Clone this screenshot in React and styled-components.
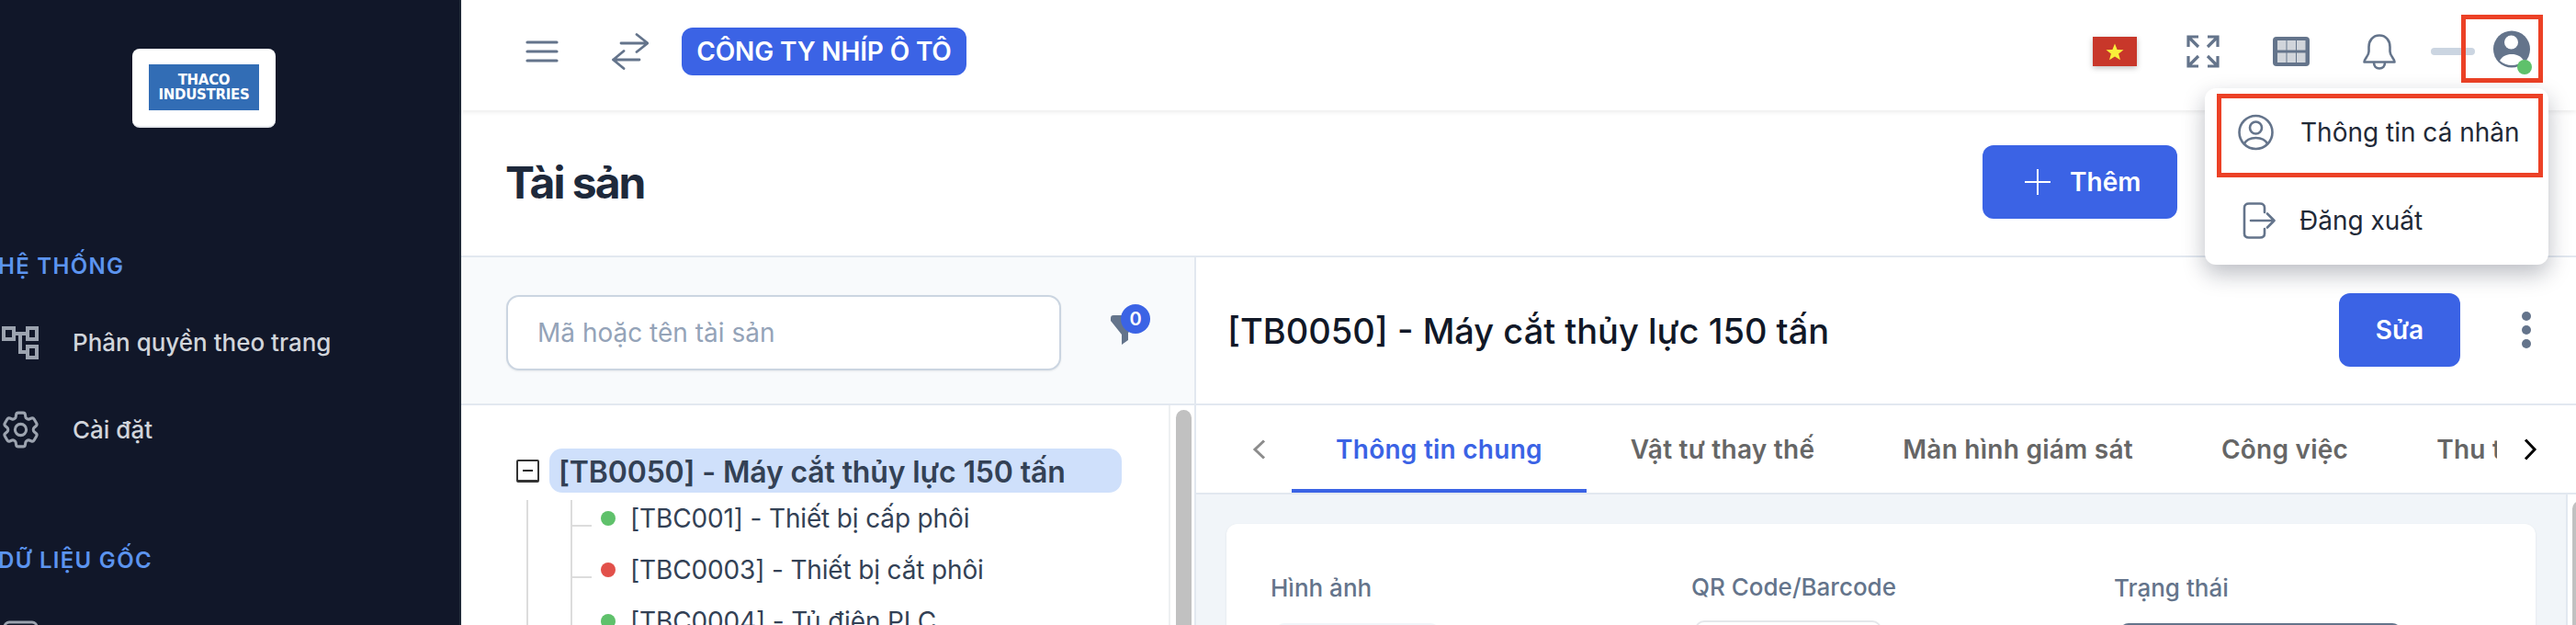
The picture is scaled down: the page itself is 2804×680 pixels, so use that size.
import React from 'react'
import styled, { createGlobalStyle } from 'styled-components'
import { HiOutlineCog6Tooth } from 'react-icons/hi2'

const GlobalStyle = createGlobalStyle`
html, body {
  margin: 0;
  padding: 0;
  background: #fff;
}
* {
  box-sizing: border-box;
}
body {
  font-family: Inter, "Noto Sans", sans-serif;
}
`

const children = [
    { id: 'tb1', label: '[TBC001] - Thiết bị cấp phôi', color: '#5fc16b' },
    { id: 'tb3', label: '[TBC0003] - Thiết bị cắt phôi', color: '#e2504a' },
    { id: 'tb4', label: '[TBC0004] - Tủ điện PLC', color: '#5fc16b' },
]

const tabs = ['Thông tin chung', 'Vật tư thay thế', 'Màn hình giám sát', 'Công việc', 'Thu thập']

function App() {
    return (
        <Page>
            <GlobalStyle />
            <Sidebar>
                <LogoCard>
                    <LogoPlate>
                        <span>THACO</span>
                        <span>INDUSTRIES</span>
                    </LogoPlate>
                </LogoCard>
                <SectionTitle $top={129}>HỆ THỐNG</SectionTitle>
                <NavItem>
                    <NavIcon>
                        <svg width="40" height="36" viewBox="0 0 40 36" fill="none" stroke="#9ca3af" strokeWidth="4">
                            <rect x="2" y="2" width="11" height="12" />
                            <rect x="28" y="2" width="10" height="12" />
                            <rect x="28" y="22" width="10" height="12" />
                            <path d="M13 8H28M20 8V28H28" />
                        </svg>
                    </NavIcon>
                    Phân quyền theo trang
                </NavItem>
                <NavItem>
                    <NavIcon>
                        <GearIcon />
                    </NavIcon>
                    Cài đặt
                </NavItem>
                <SectionTitle $top={73}>DỮ LIỆU GỐC</SectionTitle>
                <NavItem>
                    <NavIcon>
                        <svg width="40" height="36" viewBox="0 0 40 36" fill="none" stroke="#9ca3af" strokeWidth="3">
                            <rect x="3" y="2" width="35" height="32" rx="5" />
                        </svg>
                    </NavIcon>
                </NavItem>
            </Sidebar>

            <Main>
                <Header>
                    <HeaderGroup>
                        <svg width="36" height="24" viewBox="0 0 36 24" fill="none" stroke="#64748b" strokeWidth="3.2" strokeLinecap="round">
                            <path d="M2 2H34M2 12H34M2 22H34" />
                        </svg>
                        <SwapIcon width="40" height="40" viewBox="0 0 40 40" fill="none" stroke="#64748b" strokeWidth="2.8" strokeLinecap="round" strokeLinejoin="round">
                            <path d="M10 11H39M27 1.5L39 11L27 20.5" />
                            <path d="M30 29H1.5M13 19.5L1.5 29L13 38.5" />
                        </SwapIcon>
                        <CompanyBadge>CÔNG TY NHÍP Ô TÔ</CompanyBadge>
                    </HeaderGroup>
                    <HeaderTools>
                        <Flag width="48" height="32" viewBox="0 0 48 32">
                            <rect width="48" height="32" fill="#c8372a" />
                            <polygon points="24,7.5 26.6,14 33.5,14.3 28.1,18.6 30,25.2 24,21.5 18,25.2 19.9,18.6 14.5,14.3 21.4,14" fill="#f9ee3a" />
                        </Flag>
                        <ToolIcon $w={36} $gap={54}>
                            <svg width="36" height="36" viewBox="0 0 36 36" fill="none" stroke="#64748b" strokeWidth="3.2">
                                <path d="M2 13V2H13M2 2L13 13" />
                                <path d="M34 13V2H23M34 2L23 13" />
                                <path d="M2 23V34H13M2 34L13 23" />
                                <path d="M34 23V34H23M34 34L23 23" />
                            </svg>
                        </ToolIcon>
                        <ToolIcon $w={40} $gap={58}>
                            <svg width="40" height="32" viewBox="0 0 40 32">
                                <rect width="40" height="32" rx="4" fill="#64748b" />
                                <g fill="#d1d5db">
                                    <rect x="5" y="4" width="9.5" height="10.5" />
                                    <rect x="15.5" y="4" width="9.5" height="10.5" />
                                    <rect x="26" y="4" width="9.5" height="10.5" />
                                    <rect x="5" y="17.5" width="9.5" height="10.5" />
                                    <rect x="15.5" y="17.5" width="9.5" height="10.5" />
                                    <rect x="26" y="17.5" width="9.5" height="10.5" />
                                </g>
                            </svg>
                        </ToolIcon>
                        <ToolIcon $w={36} $gap={58}>
                            <svg width="36" height="39" viewBox="0 0 36 39" fill="none" stroke="#64748b" strokeWidth="2.6" strokeLinejoin="round">
                                <path d="M18 1.5C10.5 1.5 6.5 7.5 6.5 14V19C6.5 24 1.5 26.5 1.5 30.5H34.5C34.5 26.5 29.5 24 29.5 19V14C29.5 7.5 25.5 1.5 18 1.5Z" />
                                <path d="M12 31C12 35 14.5 37.5 18 37.5C21.5 37.5 24 35 24 31" />
                            </svg>
                        </ToolIcon>
                        <UserBar />
                        <AvatarWrap>
                            <svg width="40" height="41" viewBox="0 0 40 41">
                                <circle cx="20" cy="20.5" r="20" fill="#64748b" />
                                <circle cx="19.5" cy="13" r="7.5" fill="#fff" />
                                <path d="M7 33C10 28 14 26 20 26C26 26 30 28 33 33C29 36.5 25 38 20 38C15 38 11 36.5 7 33Z" fill="#fff" />
                            </svg>
                            <OnlineDot />
                            <AvatarMark />
                        </AvatarWrap>
                    </HeaderTools>
                </Header>

                <TitleRow>
                    <PageTitle>Tài sản</PageTitle>
                    <AddButton>
                        <svg width="28" height="28" viewBox="0 0 28 28" fill="none" stroke="#fff" strokeWidth="2">
                            <path d="M14 0V28M0 14H28" />
                        </svg>
                        Thêm
                    </AddButton>
                </TitleRow>

                <Content>
                    <TreePanel>
                        <SearchBar>
                            <SearchInput placeholder="Mã hoặc tên tài sản" />
                            <FilterWrap>
                                <svg width="32" height="34" viewBox="0 0 32 34">
                                    <path d="M1 4Q1 1 4 1H30V10L20 20V28L13 33V22L1 7Z" fill="#64748b" />
                                </svg>
                                <FilterCount>0</FilterCount>
                            </FilterWrap>
                        </SearchBar>
                        <TreeArea>
                            <TreeBody>
                                <TreeRoot>
                                    <TreeToggle>
                                        <i />
                                    </TreeToggle>
                                    <RootLabel>[TB0050] - Máy cắt thủy lực 150 tấn</RootLabel>
                                </TreeRoot>
                                <TreeLine>
                                    <TreeBranch>
                                        {children.map((item) => (
                                            <ChildRow key={item.id}>
                                                <StatusDot $color={item.color} />
                                                {item.label}
                                            </ChildRow>
                                        ))}
                                    </TreeBranch>
                                </TreeLine>
                            </TreeBody>
                            <ScrollTrack>
                                <ScrollThumb />
                            </ScrollTrack>
                        </TreeArea>
                    </TreePanel>

                    <DetailPanel>
                        <DetailHead>
                            <DetailTitle>[TB0050] - Máy cắt thủy lực 150 tấn</DetailTitle>
                            <EditButton>Sửa</EditButton>
                            <MoreDots>
                                <i />
                                <i />
                                <i />
                            </MoreDots>
                        </DetailHead>
                        <TabBar>
                            <TabArrow $color="#8c8c8c">
                                <svg width="15" height="22" viewBox="0 0 15 22" fill="none" stroke="currentColor" strokeWidth="3">
                                    <path d="M13 1.5L3 11L13 20.5" />
                                </svg>
                            </TabArrow>
                            <TabStrip>
                                {tabs.map((tab, i) => (
                                    <Tab key={tab} $active={i === 0}>{tab}</Tab>
                                ))}
                            </TabStrip>
                            <TabArrow $color="#000" $right>
                                <svg width="15" height="24" viewBox="0 0 15 24" fill="none" stroke="currentColor" strokeWidth="3">
                                    <path d="M2 1.5L12 12L2 22.5" />
                                </svg>
                            </TabArrow>
                        </TabBar>
                        <DetailBody>
                            <CardPane>
                                <InfoCard>
                                    <Field>
                                        <FieldLabel>Hình ảnh</FieldLabel>
                                        <PhotoBox />
                                    </Field>
                                    <Field>
                                        <FieldLabel $up>QR Code/Barcode</FieldLabel>
                                        <CodeBox />
                                    </Field>
                                    <Field>
                                        <FieldLabel>Trạng thái</FieldLabel>
                                        <StatusBox />
                                    </Field>
                                </InfoCard>
                            </CardPane>
                            <PageTrack>
                                <ScrollThumb />
                            </PageTrack>
                        </DetailBody>
                    </DetailPanel>
                </Content>
            </Main>

            <UserMenu>
                <MenuMark />
                <MenuItem>
                    <svg width="39" height="40" viewBox="0 0 39 40" fill="none" stroke="#64748b" strokeWidth="2.6">
                        <circle cx="19.5" cy="20" r="18" />
                        <circle cx="19.5" cy="15" r="6.5" />
                        <path d="M6.5 33C9 28 13.5 26 19.5 26C25.5 26 30 28 32.5 33" />
                    </svg>
                    Thông tin cá nhân
                </MenuItem>
                <MenuItem>
                    <LogoutIcon width="36" height="40" viewBox="0 0 36 40" fill="none" stroke="#64748b" strokeWidth="2.6" strokeLinecap="round" strokeLinejoin="round">
                        <path d="M24 11V6C24 3 22 1.5 19 1.5H7C4 1.5 2 3 2 6V34C2 37 4 38.5 7 38.5H19C22 38.5 24 37 24 34V29" />
                        <path d="M9 20H34.5M27 12.5L34.5 20L27 27.5" />
                    </LogoutIcon>
                    Đăng xuất
                </MenuItem>
            </UserMenu>
        </Page>
    )
}

export default App

const Page = styled.div`
position: relative;
display: flex;
width: 2804px;
height: 680px;
overflow: hidden;
`

const Sidebar = styled.aside`
flex: 0 0 502px;
height: 680px;
overflow: hidden;
padding-top: 53px;
background: #111729;
border-right: 2px solid #1f2937;
`

const LogoCard = styled.div`
display: flex;
align-items: center;
justify-content: center;
width: 156px;
height: 86px;
margin-left: 144px;
background: #fff;
border-radius: 8px;
border-bottom: 2px solid #e5e7eb;
`

const LogoPlate = styled.div`
display: flex;
flex-direction: column;
align-items: center;
justify-content: center;
width: 120px;
height: 50px;
background: #326db5;
color: #fff;
font-family: "DejaVu Sans", sans-serif;
font-size: 15px;
font-weight: 700;
line-height: 16px;
letter-spacing: -0.3px;
`

const SectionTitle = styled.div`
margin: ${(props) => props.$top}px 0 13px -2px;
color: #5c94ef;
font-size: 24px;
font-weight: 600;
line-height: 44px;
letter-spacing: 1.3px;
`

const NavItem = styled.div`
display: flex;
align-items: center;
height: 95px;
padding-left: 2px;
color: #d1d5db;
font-size: 26px;
font-weight: 500;
`

const NavIcon = styled.span`
display: flex;
align-items: center;
justify-content: center;
flex: 0 0 40px;
height: 40px;
margin-right: 37px;
`

const GearIcon = styled(HiOutlineCog6Tooth)`
flex: none;
width: 49px;
height: 49px;
margin: 0 -4.5px;
color: #9ca3af;
`

const Main = styled.div`
display: flex;
flex-direction: column;
flex: 1;
min-width: 0;
`

const Header = styled.header`
position: relative;
z-index: 2;
display: flex;
align-items: center;
justify-content: space-between;
flex: 0 0 120px;
padding: 0 50px 8px 70px;
background: #fff;
box-shadow: 0 2px 5px rgb(0 0 0 / 8%);
`

const HeaderGroup = styled.div`
display: flex;
align-items: center;
`

const SwapIcon = styled.svg`
margin: 0 36px 0 58px;
`

const CompanyBadge = styled.div`
display: flex;
align-items: center;
justify-content: center;
width: 310px;
height: 52px;
background: #3b63e5;
border-radius: 12px;
color: #fff;
font-size: 28px;
font-weight: 600;
letter-spacing: -0.15px;
white-space: nowrap;
`

const HeaderTools = styled.div`
display: flex;
align-items: center;
`

const Flag = styled.svg`
box-shadow: 0 2px 6px rgb(0 0 0 / 25%);
`

const ToolIcon = styled.span`
display: flex;
align-items: center;
width: ${(props) => props.$w}px;
margin-left: ${(props) => props.$gap}px;
`

const UserBar = styled.span`
width: 48px;
height: 8px;
margin: 0 20px 0 38px;
background: #cbd5e1;
border-radius: 4px;
`

const AvatarWrap = styled.div`
position: relative;
width: 40px;
height: 41px;
margin-bottom: 5px;
svg {
    display: block;
}
`

const OnlineDot = styled.span`
position: absolute;
left: 26px;
top: 32px;
width: 16px;
height: 16px;
background: #5fc16b;
border-radius: 50%;
`

const AvatarMark = styled.span`
position: absolute;
left: -35px;
top: -17px;
width: 89px;
height: 74px;
border: 5px solid #ec4126;
`

const TitleRow = styled.div`
display: flex;
align-items: center;
justify-content: space-between;
flex: 0 0 160px;
padding: 0 434px 2px 48px;
background: #fff;
border-bottom: 2px solid #e2e8f0;
`

const PageTitle = styled.h1`
margin: 0;
color: #1e293b;
font-size: 48px;
font-weight: 700;
letter-spacing: -2px;
`

const AddButton = styled.button`
display: flex;
align-items: center;
gap: 21px;
width: 212px;
height: 80px;
padding: 0 0 0 46px;
background: #3b63e5;
border: none;
border-radius: 12px;
color: #fff;
font-family: inherit;
font-size: 28px;
font-weight: 600;
`

const Content = styled.div`
display: flex;
flex: 1;
min-height: 0;
`

const TreePanel = styled.section`
display: flex;
flex-direction: column;
flex: 0 0 800px;
border-right: 2px solid #e2e8f0;
`

const SearchBar = styled.div`
display: flex;
align-items: flex-start;
flex: 0 0 161px;
padding: 41px 0 0 49px;
background: #f8fafc;
border-bottom: 2px solid #e2e8f0;
`

const SearchInput = styled.input`
width: 604px;
height: 82px;
padding: 0 32px;
background: #fff;
border: 2px solid #cbd5e1;
border-radius: 14px;
box-shadow: 0 1px 2px rgb(15 23 42 / 8%);
color: #1e293b;
font-family: inherit;
font-size: 28px;
outline: none;
&::placeholder {
    color: #94a3b8;
}
`

const FilterWrap = styled.div`
position: relative;
width: 44px;
height: 34px;
margin: 21px 0 0 53px;
svg {
    display: block;
}
`

const FilterCount = styled.span`
position: absolute;
left: 12px;
top: -11px;
display: flex;
align-items: center;
justify-content: center;
width: 32px;
height: 32px;
background: #3b63e5;
border-radius: 50%;
color: #fff;
font-size: 20px;
font-weight: 600;
`

const TreeArea = styled.div`
display: flex;
flex: 1;
min-height: 0;
`

const TreeBody = styled.div`
flex: 1;
overflow: hidden;
padding: 47px 0 0 60px;
background: #fff;
`

const TreeRoot = styled.div`
display: flex;
align-items: center;
gap: 11px;
`

const TreeToggle = styled.span`
display: flex;
align-items: center;
justify-content: center;
width: 25px;
height: 25px;
background: #fff;
border: 2px solid #333;
border-bottom-width: 3px;
border-radius: 2px;
i {
    display: block;
    width: 11px;
    height: 2px;
    background: #222;
}
`

const RootLabel = styled.div`
width: 623px;
height: 48px;
padding-left: 10px;
background: #cfe0fb;
border-radius: 14px;
color: #334155;
font-size: 32px;
font-weight: 600;
line-height: 51px;
letter-spacing: -0.15px;
white-space: nowrap;
`

const TreeLine = styled.div`
margin: 8px 0 0 11px;
padding-left: 46px;
border-left: 2px solid #dcdcdc;
`

const TreeBranch = styled.div`
border-left: 2px solid #dcdcdc;
`

const ChildRow = styled.div`
position: relative;
display: flex;
align-items: center;
gap: 16px;
height: 40px;
margin-bottom: 16px;
padding-left: 31px;
color: #334155;
font-size: 28px;
letter-spacing: -0.15px;
&::before {
    content: "";
    position: absolute;
    left: 0;
    top: 27px;
    width: 21px;
    height: 2px;
    background: #dcdcdc;
}
`

const StatusDot = styled.span`
flex: none;
width: 16px;
height: 16px;
background: ${(props) => props.$color};
border-radius: 50%;
`

const ScrollTrack = styled.div`
flex: 0 0 28px;
padding: 5px 0 0 6px;
background: #fff;
border-left: 2px solid #eef0f2;
`

const ScrollThumb = styled.div`
width: 17px;
height: 100%;
background: #c1c1c1;
border-radius: 9px 9px 0 0;
`

const DetailPanel = styled.section`
display: flex;
flex-direction: column;
flex: 1;
min-width: 0;
`

const DetailHead = styled.div`
display: flex;
align-items: center;
flex: 0 0 161px;
padding: 0 49px 2px 34px;
background: #fff;
border-bottom: 2px solid #e2e8f0;
`

const DetailTitle = styled.h2`
flex: 1;
margin: 2px 0 0;
color: #111827;
font-size: 38px;
font-weight: 500;
white-space: nowrap;
`

const EditButton = styled.button`
width: 132px;
height: 80px;
background: #3b63e5;
border: none;
border-radius: 12px;
color: #fff;
font-family: inherit;
font-size: 28px;
font-weight: 600;
`

const MoreDots = styled.div`
display: flex;
flex-direction: column;
gap: 5px;
margin-left: 67px;
i {
    display: block;
    width: 10px;
    height: 10px;
    background: #64748b;
    border-radius: 50%;
}
`

const TabBar = styled.div`
display: flex;
align-items: stretch;
flex: 0 0 97px;
padding-left: 61px;
background: #fff;
border-bottom: 2px solid #e2e8f0;
`

const TabArrow = styled.span`
display: flex;
align-items: center;
flex: 0 0 15px;
margin: ${(props) => (props.$right ? '0 0 0 29px' : '0 28px 0 0')};
color: ${(props) => props.$color};
`

const TabStrip = styled.div`
display: flex;
flex: 0 0 1312px;
overflow: hidden;
`

const Tab = styled.div`
flex: none;
height: 95px;
padding: 0 48px;
border-bottom: 4px solid ${(props) => (props.$active ? '#3b63e5' : 'transparent')};
color: ${(props) => (props.$active ? '#3b63e5' : '#666')};
font-size: 28px;
font-weight: 600;
line-height: 96px;
letter-spacing: 0.25px;
white-space: nowrap;
`

const DetailBody = styled.div`
display: flex;
flex: 1;
min-height: 0;
background: #f1f5f9;
`

const CardPane = styled.div`
flex: 1;
overflow: hidden;
padding: 32px 33px 0;
`

const InfoCard = styled.div`
display: grid;
grid-template-columns: 458px 460px 1fr;
height: 200px;
padding: 50px 0 0 48px;
background: #fff;
border-radius: 12px;
box-shadow: 0 1px 3px rgb(15 23 42 / 8%);
`

const Field = styled.div`
display: flex;
flex-direction: column;
align-items: flex-start;
`

const FieldLabel = styled.div`
margin-top: ${(props) => (props.$up ? '-1px' : '0')};
color: #64748b;
font-size: 26px;
font-weight: 500;
line-height: 40px;
`

const PhotoBox = styled.div`
width: 179px;
height: 60px;
margin: 18px 0 0 5px;
background: #f1f5f9;
border-radius: 10px;
`

const CodeBox = styled.div`
width: 203px;
height: 60px;
margin: 16px 0 0 4px;
background: #fff;
border: 2px solid #e5e7eb;
border-radius: 10px;
`

const StatusBox = styled.div`
width: 307px;
height: 60px;
margin: 18px 0 0 6px;
background: #64748b;
border-radius: 10px;
`

const PageTrack = styled.div`
flex: 0 0 11px;
overflow: hidden;
padding: 7px 0 0 5px;
background: #fff;
border-left: 2px solid #e2e8f0;
`

const UserMenu = styled.div`
position: absolute;
z-index: 3;
right: 30px;
top: 96px;
width: 374px;
height: 192px;
background: #fff;
border-radius: 12px;
box-shadow: 0 10px 24px rgb(15 23 42 / 28%);
`

const MenuMark = styled.span`
position: absolute;
left: 13px;
top: 6px;
width: 355px;
height: 91px;
border: 5px solid #ec4126;
`

const MenuItem = styled.div`
display: flex;
align-items: center;
gap: 29px;
height: 96px;
padding-left: 36px;
color: #1f2937;
font-size: 28px;
`

const LogoutIcon = styled.svg`
margin-left: 5px;
margin-right: -3px;
`
